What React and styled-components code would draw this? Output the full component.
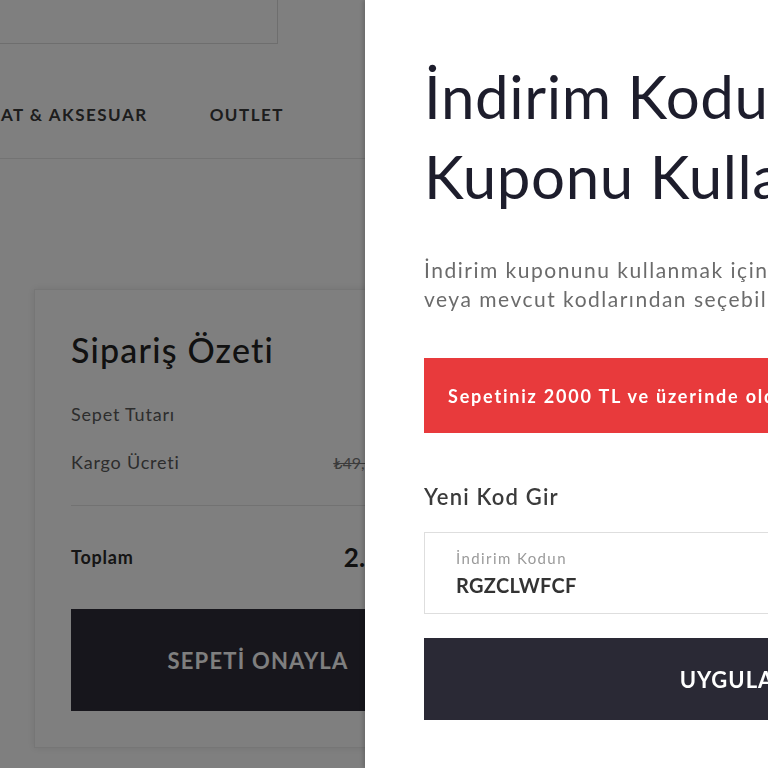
import styled, { createGlobalStyle } from "styled-components";

const GlobalStyle = createGlobalStyle`
  html, body {
    margin: 0;
    height: 100%;
    overflow: hidden;
    background: #fff;
  }
  body {
    font-family: "Lato", "Open Sans", sans-serif;
    color: #2a2a2a;
  }
  * { box-sizing: border-box; }
`;

const Page = styled.div`
  width: 100vw;
  height: 100vh;
  background: #fff;
`;

const TopBar = styled.div`
  width: 278px;
  height: 44px;
  display: flex;
  justify-content: flex-end;
  overflow: hidden;
`;

const SearchBox = styled.div`
  flex: 0 0 340px;
  height: 44px;
  border: 1px solid #dcdcdc;
  border-top: none;
`;

const NavWrap = styled.div`
  height: 115px;
  border-bottom: 1px solid #e6e6e6;
`;

const Nav = styled.nav`
  width: 284px;
  padding-top: 60px;
  display: flex;
  justify-content: flex-end;
  gap: 62px;
  overflow: hidden;
`;

const NavItem = styled.a`
  flex: none;
  font-size: 17px;
  font-weight: 700;
  letter-spacing: 1.5px;
  color: #3a3a3a;
  text-transform: uppercase;
  white-space: nowrap;
`;

const Content = styled.div`
  padding: 130px 0 0 34px;
`;

const Card = styled.div`
  width: 448px;
  padding: 40px 36px 36px;
  border: 1px solid #ececec;
  box-shadow: 0 0 8px rgba(0, 0, 0, 0.1);
`;

const CardTitle = styled.h2`
  margin: 0 0 20px;
  font-size: 34px;
  font-weight: 500;
  line-height: 40px;
  letter-spacing: 1.2px;
  color: #222;
`;

const Row = styled.div`
  display: flex;
  justify-content: space-between;
  align-items: center;
  height: 48px;
  font-size: 18px;
  letter-spacing: 0.8px;
  color: ${(p) => (p.$total ? "#2a2a2a" : "#5a5a5a")};
  font-weight: ${(p) => (p.$total ? 700 : 400)};
`;

const Value = styled.span`
  font-size: ${(p) => (p.$big ? "26px" : "16px")};
  font-weight: ${(p) => (p.$big ? 700 : 400)};
  letter-spacing: 0;
  color: ${(p) => (p.$big ? "#222" : "#555")};
`;

const Old = styled.s`
  color: #777;
  margin-right: 5px;
`;

const Divider = styled.hr`
  border: none;
  border-top: 1px solid #e4e4e4;
  margin: 19px 0 27px;
`;

const ConfirmButton = styled.button`
  display: block;
  width: 100%;
  height: 102px;
  margin-top: 28px;
  border: none;
  background: #2e2c38;
  color: #fff;
  font-family: inherit;
  font-size: 22px;
  font-weight: 700;
  letter-spacing: 1.2px;
`;

const Backdrop = styled.div`
  position: fixed;
  inset: 0;
  background: rgba(0, 0, 0, 0.5);
`;

const Drawer = styled.aside`
  position: fixed;
  top: 0;
  left: 365px;
  width: 728px;
  height: 100vh;
  background: #fff;
  box-shadow: -2px 0 4px rgba(0, 0, 0, 0.18);
  padding: 56px 63px 0 59px;
`;

const Heading = styled.h1`
  margin: 0;
  font-size: 60px;
  font-weight: 400;
  line-height: 80px;
  letter-spacing: 0.6px;
  color: #1d1d2c;
  white-space: nowrap;
`;

const Lead = styled.p`
  margin: 39px 0 0;
  font-size: 21px;
  line-height: 29px;
  letter-spacing: 1.5px;
  color: #6b6b6b;
  white-space: nowrap;
`;

const Alert = styled.div`
  margin-top: 45px;
  height: 75px;
  padding: 0 24px;
  display: flex;
  align-items: center;
  background: #e83a3c;
  color: #fff;
  font-size: 18px;
  font-weight: 700;
  letter-spacing: 1.8px;
  white-space: nowrap;
`;

const SectionLabel = styled.h3`
  margin: 52px 0 0;
  font-size: 22px;
  font-weight: 600;
  line-height: 24px;
  letter-spacing: 1.2px;
  color: #3b3b3b;
`;

const Field = styled.label`
  display: flex;
  flex-direction: column;
  height: 82px;
  margin-top: 23px;
  padding: 17px 31px 0;
  border: 1px solid #dedede;
`;

const FieldLabel = styled.span`
  font-size: 15px;
  line-height: 16px;
  letter-spacing: 1.4px;
  color: #9a9a9a;
`;

const FieldInput = styled.input`
  border: none;
  outline: none;
  padding: 0;
  margin-top: 7px;
  font-family: inherit;
  font-size: 20px;
  font-weight: 700;
  line-height: 24px;
  letter-spacing: 0.3px;
  color: #333;
  background: transparent;
`;

const ApplyButton = styled.button`
  display: block;
  width: 100%;
  height: 82px;
  margin-top: 24px;
  border: none;
  background: #2a2935;
  color: #fff;
  font-family: inherit;
  font-size: 22px;
  font-weight: 700;
  letter-spacing: 1px;
`;

export default function App() {
  return (
    <>
      <GlobalStyle />
      <Page>
        <TopBar>
          <SearchBox />
        </TopBar>
        <NavWrap>
          <Nav>
            <NavItem>Çanta</NavItem>
            <NavItem>Saat &amp; Aksesuar</NavItem>
            <NavItem>Outlet</NavItem>
          </Nav>
        </NavWrap>
        <Content>
          <Card>
            <CardTitle>Sipariş Özeti</CardTitle>
            <Row>
              <span>Sepet Tutarı</span>
              <Value>2.199 TL</Value>
            </Row>
            <Row>
              <span>Kargo Ücreti</span>
              <Value>
                <Old>₺49,90</Old>Ücretsiz
              </Value>
            </Row>
            <Divider />
            <Row $total>
              <span>Toplam</span>
              <Value $big>2.199 TL</Value>
            </Row>
            <ConfirmButton>SEPETİ ONAYLA</ConfirmButton>
          </Card>
        </Content>
      </Page>
      <Backdrop />
      <Drawer>
        <Heading>
          İndirim Kodu
          <br />
          Kuponu Kullan
        </Heading>
        <Lead>
          İndirim kuponunu kullanmak için kodunu girebilir
          <br />
          veya mevcut kodlarından seçebilirsin.
        </Lead>
        <Alert>
          Sepetiniz 2000 TL ve üzerinde olduğunda indirim kodu kullanabilirsiniz.
        </Alert>
        <SectionLabel>Yeni Kod Gir</SectionLabel>
        <Field>
          <FieldLabel>İndirim Kodun</FieldLabel>
          <FieldInput defaultValue="RGZCLWFCF" />
        </Field>
        <ApplyButton>UYGULA</ApplyButton>
      </Drawer>
    </>
  );
}
